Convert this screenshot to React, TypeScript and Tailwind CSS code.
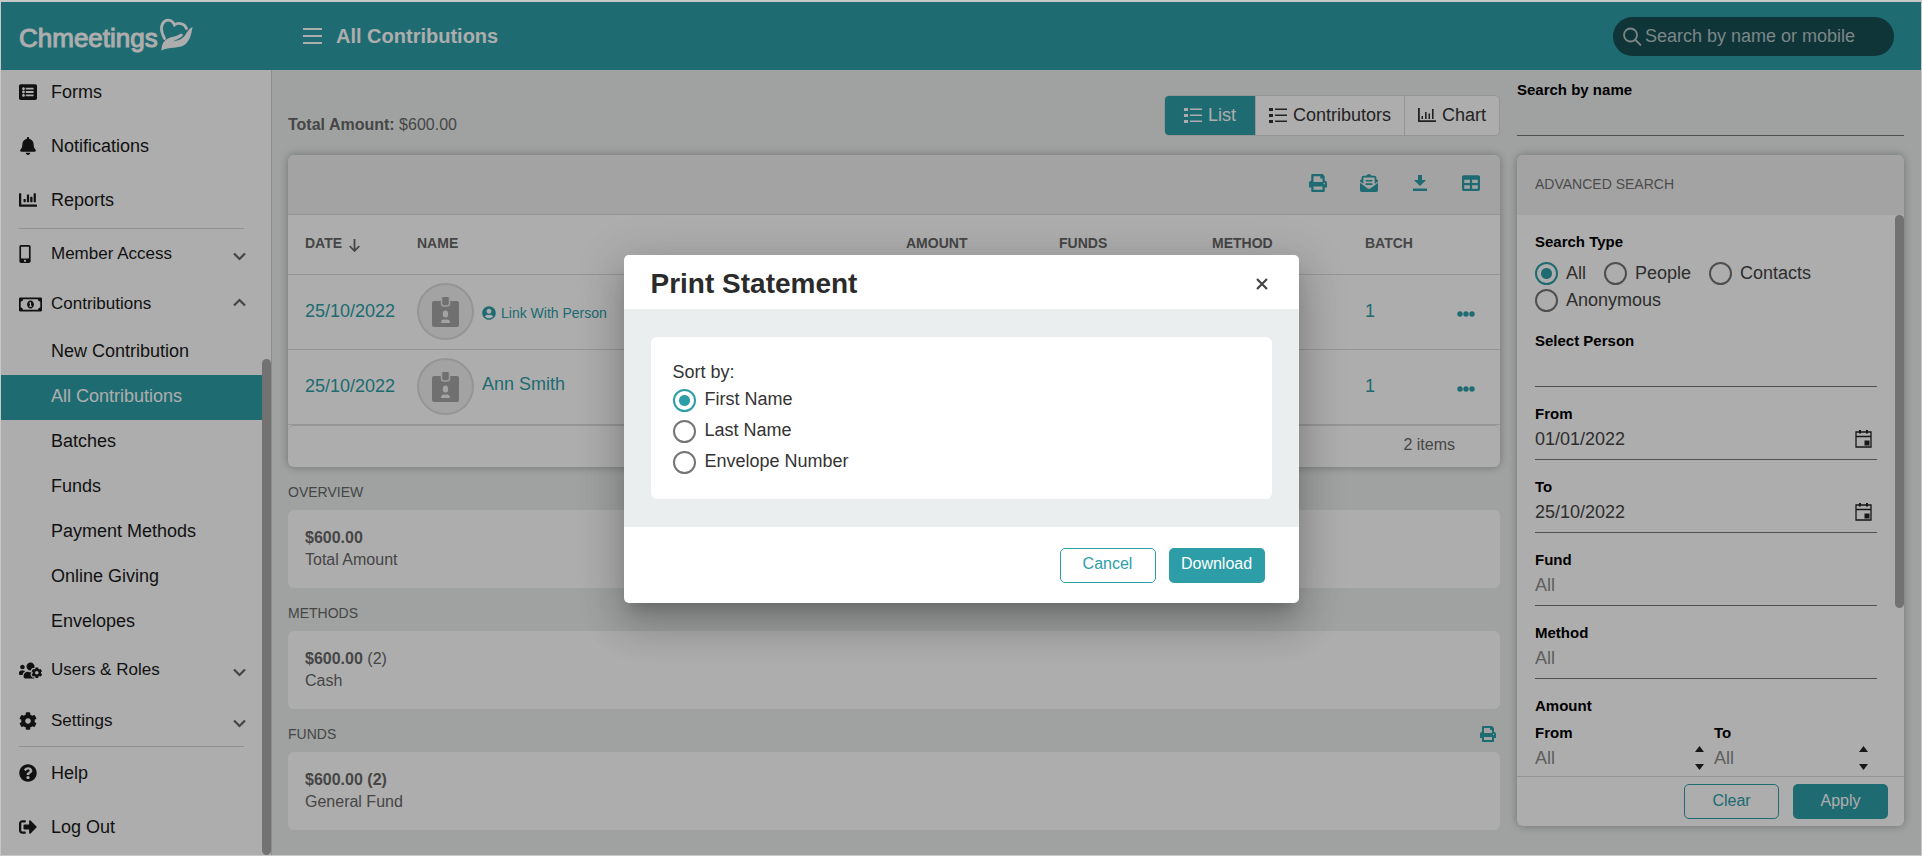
import React, { useState } from 'react';
import type { ReactNode } from 'react';
import {
  FaBell,
  FaChartBar,
  FaCog,
  FaEnvelopeOpenText,
  FaListAlt,
  FaMobileAlt,
  FaPrint,
  FaQuestionCircle,
  FaRegMoneyBillAlt,
  FaSignOutAlt,
  FaTable,
  FaUserCircle,
  FaUsersCog,
} from 'react-icons/fa';
import clsx from 'clsx';

interface Contribution {
  id: number;
  date: string;
  name?: string;
  batch: string;
}

const contributions: Contribution[] = [
  { id: 1, date: '25/10/2022', batch: '1' },
  { id: 2, date: '25/10/2022', name: 'Ann Smith', batch: '1' },
];

const contributionLinks = [
  'New Contribution',
  'All Contributions',
  'Batches',
  'Funds',
  'Payment Methods',
  'Online Giving',
  'Envelopes',
];

const LogoMark = () => (
  <svg width="33" height="34" viewBox="0 0 33 34" fill="none" className="mb-0.5" aria-hidden="true">
    <path
      d="M4.500 20.500C1.500 15 .500 10 2.500 6C5 1 11.500 .500 14.500 7C18 4 25 5.500 26.500 10.500"
      stroke="currentColor"
      strokeWidth="2.800"
      strokeLinecap="round"
    />
    <path
      d="M1.500 32.500C1.500 28 3 22 9 20C13 18.500 16 18.500 20 16C22 15 24 16.500 22 18.500C20 20.500 16 21.500 13 23.500C19 22.500 23 20.500 25.500 16.500C27.500 13.500 28.500 11 32.500 9C31.500 16 30 22.500 25 26.500C19 31 9 28.500 1.500 32.500Z"
      fill="currentColor"
    />
  </svg>
);

const ListIcon = () => (
  <svg width="18" height="16" viewBox="0 0 18 16" fill="currentColor" aria-hidden="true">
    <path d="M0 1h4v3H0zM0 7h4v3H0zM0 13h4v3H0zM6 1.500h12v1.500H6zM6 7.500h12V9H6zM6 13.500h12V15H6z" />
  </svg>
);

const ChartIcon = () => (
  <svg width="18" height="16" viewBox="0 0 18 16" fill="currentColor" aria-hidden="true">
    <path d="M0 1h1.800v12.200H18V15H0zM3.500 9H5v3H3.500zM7 5h1.600v7H7zM10.500 6.500H12V12h-1.500zM14 2h1.600v10H14z" />
  </svg>
);

const Chevron = ({ up }: { up?: boolean }) => (
  <svg width="13" height="9" viewBox="0 0 13 9" fill="none" stroke="#666" strokeWidth="2.200" aria-hidden="true">
    <path d={up ? 'M1 7.500 6.500 2 12 7.500' : 'M1 1.500 6.500 7 12 1.500'} />
  </svg>
);

const BadgeIcon = () => (
  <svg width="27" height="30" viewBox="0 0 27 30" aria-hidden="true">
    <rect y="4" width="27" height="26" rx="2" fill="#a6a6a6" />
    <rect x="9.500" y="-1" width="8" height="10" rx="2.500" fill="#a6a6a6" stroke="#e8e8e8" strokeWidth="1.500" />
    <ellipse cx="13.500" cy="17" rx="2.700" ry="3.600" fill="#f0f0f0" />
    <path d="M9 26c0-3 2-4 4.500-3.200C16 22 18 23 18 26z" fill="#f0f0f0" />
  </svg>
);

const CalendarIcon = () => (
  <svg width="17" height="18" viewBox="0 0 17 18" fill="none" stroke="#222" aria-hidden="true">
    <path d="M1 2h15v15H1zM1 6.500h15" strokeWidth="1.300" />
    <path d="M5 0v3.500M12 0v3.500" strokeWidth="2" />
    <rect x="10" y="11" width="4" height="4" fill="#222" />
  </svg>
);

interface RadioProps {
  name: string;
  label: string;
  checked: boolean;
  onChange: () => void;
  className?: string;
}

const Radio: React.FC<RadioProps> = ({ name, label, checked, onChange, className }) => (
  <label className={clsx('flex items-center', className)}>
    <input
      type="radio"
      name={name}
      checked={checked}
      onChange={onChange}
      className="size-[23px] shrink-0 appearance-none rounded-full border-2 border-[#757575] bg-white checked:border-[#2d9ea8] checked:bg-[radial-gradient(circle,#2d9ea8_5px,transparent_6px)]"
    />
    <span className="pb-0.5">{label}</span>
  </label>
);

interface NavItemProps {
  icon: ReactNode;
  label: string;
  chevron?: 'up' | 'down';
  className?: string;
}

const NavItem: React.FC<NavItemProps> = ({ icon, label, chevron, className }) => (
  <a href="#" className={clsx('flex items-center pr-4 pl-[18px]', className)}>
    <span className="flex w-8 items-center">{icon}</span>
    <span className="flex-1">{label}</span>
    {chevron && (
      <span className={chevron === 'up' ? 'pb-1' : 'pt-1'}>
        <Chevron up={chevron === 'up'} />
      </span>
    )}
  </a>
);

const Sidebar = () => (
  <aside className="flex w-[271px] shrink-0 overflow-hidden border-r border-[#d0d0d0] bg-white text-lg text-[#1a1a1a]">
    <nav className="min-w-0 flex-1">
      <div className="flex flex-col gap-2.5 pb-1.5">
        <NavItem className="h-11" icon={<FaListAlt size={18} />} label="Forms" />
        <NavItem className="h-11" icon={<FaBell size={18} />} label="Notifications" />
        <NavItem className="h-11" icon={<FaChartBar size={18} />} label="Reports" />
      </div>
      <hr className="mx-[18px] border-[#d5d5d5]" />
      <NavItem className="h-[50px] text-[17px]" icon={<FaMobileAlt size={18} className="-ml-[3px]" />} label="Member Access" chevron="down" />
      <NavItem className="h-[50px] text-[17px]" icon={<FaRegMoneyBillAlt size={23} />} label="Contributions" chevron="up" />
      <ul className="py-px">
        {contributionLinks.map((link) => (
          <li key={link}>
            <a
              href="#"
              className={clsx(
                'flex h-[45px] items-center pb-[3px] pl-[50px]',
                link === 'All Contributions' && 'bg-[#2d9ea8] text-white'
              )}
            >
              {link}
            </a>
          </li>
        ))}
      </ul>
      <NavItem className="h-[50px] pb-0.5 text-[17px]" icon={<FaUsersCog size={23} />} label="Users & Roles" chevron="down" />
      <NavItem className="h-[50px] text-[17px]" icon={<FaCog size={18} />} label="Settings" chevron="down" />
      <hr className="mx-[18px] border-[#d5d5d5]" />
      <NavItem className="h-[54px] pb-0.5" icon={<FaQuestionCircle size={18} />} label="Help" />
      <NavItem className="h-[54px] pb-0.5" icon={<FaSignOutAlt size={18} />} label="Log Out" />
    </nav>
    <div className="flex w-[9px] flex-col pt-[289px]">
      <div className="flex-1 rounded-full bg-[#a9a9a9]" />
    </div>
  </aside>
);

const Header = () => (
  <header className="flex h-[68px] shrink-0 items-center bg-[#2d9ea8] pr-[27px] pl-[18px] text-white">
    <a href="#" className="flex w-[284px] items-center gap-0.5">
      <span className="pt-1 text-[26px] leading-8 [-webkit-text-stroke:1px_white]">Chmeetings</span>
      <LogoMark />
    </a>
    <button type="button" aria-label="Toggle menu" className="mr-3.5">
      <svg width="19" height="17" viewBox="0 0 19 17" fill="currentColor" aria-hidden="true">
        <path d="M0 0h19v2H0zM0 7h19v2H0zM0 14h19v2H0z" />
      </svg>
    </button>
    <h1 className="flex-1 text-xl font-bold">All Contributions</h1>
    <label className="flex h-[39px] w-[281px] items-center gap-[3px] rounded-full bg-[#174f54] pr-4 pl-2.5">
      <svg width="19" height="19" viewBox="0 0 19 19" fill="none" stroke="#b5c5c7" strokeWidth="1.800" aria-hidden="true">
        <circle cx="7.500" cy="8" r="6.500" />
        <path d="m12 12.500 6 6" />
      </svg>
      <input
        type="text"
        aria-label="Search by name or mobile"
        placeholder="Search by name or mobile"
        className="min-w-0 flex-1 bg-transparent text-lg outline-none placeholder:text-[#b5c5c7]"
      />
    </label>
  </header>
);

const ContributionsTable = () => (
  <section className="overflow-hidden rounded-md bg-white shadow-[0_0_8px_rgba(0,0,0,0.3)]">
    <div className="flex h-[60px] items-center justify-end gap-[33px] border-b border-[#dcdcdc] bg-[#f0f0f0] pr-5 pb-1 text-[#2d9ea8]">
      <button type="button" aria-label="Print">
        <FaPrint size={18} />
      </button>
      <button type="button" aria-label="Send by email">
        <FaEnvelopeOpenText size={18} />
      </button>
      <button type="button" aria-label="Download" className="px-0.5">
        <svg width="14" height="16" viewBox="0 0 14 16" fill="currentColor" aria-hidden="true">
          <path d="M5 0h4v5h4L7 11 1 5h4zM0 13.500h14V16H0z" />
        </svg>
      </button>
      <button type="button" aria-label="Columns">
        <FaTable size={18} />
      </button>
    </div>
    <table className="w-full table-fixed text-left text-lg text-[#2d9ea8]">
      <thead>
        <tr className="h-[59px] border-b border-[#dcdcdc] text-sm text-[#686868]">
          <th className="w-28 pb-0.5 pl-[17px]">
            <span className="flex items-center gap-[7px]">
              DATE
              <svg width="11" height="13" viewBox="0 0 11 13" fill="none" stroke="currentColor" strokeWidth="1.800" className="mt-1" aria-hidden="true">
                <path d="M5.500 0v12M.700 7l4.800 5 4.800-5" />
              </svg>
            </span>
          </th>
          <th className="pb-0.5 pl-[17px]">NAME</th>
          <th className="w-[153px] pb-0.5 pl-[17px]">AMOUNT</th>
          <th className="w-[153px] pb-0.5 pl-[17px]">FUNDS</th>
          <th className="w-[153px] pb-0.5 pl-[17px]">METHOD</th>
          <th className="w-[92px] pb-0.5 pl-[17px]">BATCH</th>
          <th className="w-[60px]" aria-label="Actions" />
        </tr>
      </thead>
      <tbody>
        {contributions.map((item) => (
          <tr key={item.id} className="h-[75px] border-b border-[#dcdcdc]">
            <td className="pb-0.5 pl-[17px]">{item.date}</td>
            <td className="pl-[17px]">
              <div className="flex items-center gap-2">
                <span className="flex size-[57px] items-center justify-center rounded-full border-2 border-[#dcdcdc] bg-[#f0f0f0]">
                  <BadgeIcon />
                </span>
                {item.name ? (
                  <a href="#" className="pb-1.5">{item.name}</a>
                ) : (
                  <a href="#" className="flex items-center gap-[5px] pt-0.5 text-sm">
                    <FaUserCircle size={14} />
                    Link With Person
                  </a>
                )}
              </div>
            </td>
            <td />
            <td />
            <td />
            <td className="pb-0.5 pl-[17px]">{item.batch}</td>
            <td>
              <button type="button" aria-label="More actions" className="block pt-1 pl-[17px]">
                <svg width="18" height="6" viewBox="0 0 18 6" fill="currentColor" aria-hidden="true">
                  <circle cx="3" cy="3" r="2.700" />
                  <circle cx="9" cy="3" r="2.700" />
                  <circle cx="15" cy="3" r="2.700" />
                </svg>
              </button>
            </td>
          </tr>
        ))}
      </tbody>
    </table>
    <div className="flex h-[42px] items-center justify-end rounded-t-md border-t border-[#dcdcdc] pr-[45px] pb-0.5 text-base text-[#686868]">
      2 items
    </div>
  </section>
);

interface SummaryProps {
  title: string;
  amount: string;
  count?: ReactNode;
  label: string;
  action?: ReactNode;
}

const Summary: React.FC<SummaryProps> = ({ title, amount, count, label, action }) => (
  <section>
    <div className="flex items-center justify-between pt-[15px] pr-1 pb-2 text-[#686868]">
      <h2 className="text-sm">{title}</h2>
      {action}
    </div>
    <div className="rounded-md bg-white px-[17px] py-[17px] text-base leading-[22px] text-[#686868]">
      <p>
        <strong>{amount}</strong> {count}
      </p>
      <p>{label}</p>
    </div>
  </section>
);

interface FieldProps {
  id: string;
  label: string;
  children: ReactNode;
}

const Field: React.FC<FieldProps> = ({ id, label, children }) => (
  <div>
    <label htmlFor={id} className="block text-[15px] leading-5 font-bold text-black">
      {label}
    </label>
    <div className="flex h-9 items-center border-b border-[#757575] pb-[5px]">{children}</div>
  </div>
);

const DateField = ({ id, label, value }: { id: string; label: string; value: string }) => (
  <Field id={id} label={label}>
    <input id={id} type="text" defaultValue={value} className="min-w-0 flex-1 outline-none" />
    <button type="button" aria-label={`Open ${label} calendar`} className="pr-[5px]">
      <CalendarIcon />
    </button>
  </Field>
);

const SelectField = ({ id, label }: { id: string; label: string }) => (
  <Field id={id} label={label}>
    <select id={id} className="w-full appearance-none text-[#8c8c8c] outline-none">
      <option>All</option>
    </select>
  </Field>
);

const AmountField = ({ id, label }: { id: string; label: string }) => (
  <Field id={id} label={label}>
    <input id={id} type="text" placeholder="All" className="min-w-0 flex-1 outline-none placeholder:text-[#8c8c8c]" />
    <div className="flex flex-col gap-3 text-[#222]">
      <button type="button" aria-label={`Increase ${label}`}>
        <svg width="9" height="6" viewBox="0 0 9 6" fill="currentColor" className="block"><path d="M4.500 0 9 6H0z" /></svg>
      </button>
      <button type="button" aria-label={`Decrease ${label}`}>
        <svg width="9" height="6" viewBox="0 0 9 6" fill="currentColor" className="block"><path d="M4.500 6 9 0H0z" /></svg>
      </button>
    </div>
  </Field>
);

const AdvancedSearch = () => {
  const [searchType, setSearchType] = useState('All');

  return (
    <aside className="flex w-[387px] shrink-0 flex-col pt-2.5 pb-[29px]">
      <Field id="search-name" label="Search by name">
        <input id="search-name" type="text" className="w-full outline-none" />
      </Field>
      <section className="mt-[19px] flex min-h-0 flex-1 flex-col overflow-hidden rounded-md bg-white shadow-[0_0_8px_rgba(0,0,0,0.3)]">
        <h2 className="flex h-[60px] shrink-0 items-center bg-[#f0f0f0] pb-0.5 pl-[18px] text-sm text-[#707070]">
          ADVANCED SEARCH
        </h2>
        <div className="flex min-h-0 flex-1 overflow-hidden text-lg text-[#444]">
          <div className="flex min-w-0 flex-1 flex-col gap-[17px] px-[18px] py-[17px]">
            <fieldset>
              <legend className="mb-2 text-[15px] leading-5 font-bold text-black">Search Type</legend>
              <div className="flex flex-wrap gap-x-[18px]">
                {['All', 'People', 'Contacts', 'Anonymous'].map((type) => (
                  <Radio
                    key={type}
                    name="search-type"
                    label={type}
                    checked={searchType === type}
                    onChange={() => setSearchType(type)}
                    className="h-[27px] gap-2"
                  />
                ))}
              </div>
            </fieldset>
            <Field id="person" label="Select Person">
              <input id="person" type="text" className="w-full outline-none" />
            </Field>
            <DateField id="date-from" label="From" value="01/01/2022" />
            <DateField id="date-to" label="To" value="25/10/2022" />
            <SelectField id="fund" label="Fund" />
            <SelectField id="method" label="Method" />
            <div>
              <p className="mb-[7px] text-[15px] leading-5 font-bold text-black">Amount</p>
              <div className="flex gap-2.5">
                <div className="min-w-0 flex-1">
                  <AmountField id="amount-from" label="From" />
                </div>
                <div className="w-[163px] pr-[9px]">
                  <AmountField id="amount-to" label="To" />
                </div>
              </div>
            </div>
          </div>
          <div className="w-[9px]">
            <div className="h-[70%] rounded-full bg-[#a9a9a9]" />
          </div>
        </div>
        <div className="flex h-[50px] shrink-0 items-center justify-end gap-3.5 border-t border-[#dcdcdc] pr-4">
          <button type="button" className="h-[35px] w-[95px] rounded-[5px] border border-[#2d9ea8] pb-0.5 text-[#2d9ea8]">
            Clear
          </button>
          <button type="button" className="h-[35px] w-[95px] rounded-[5px] bg-[#2d9ea8] pb-0.5 text-white">
            Apply
          </button>
        </div>
      </section>
    </aside>
  );
};

const PrintDialog = () => {
  const [sortBy, setSortBy] = useState('First Name');

  return (
    <div className="absolute inset-0 flex items-center justify-center bg-black/32">
      <div
        role="dialog"
        aria-modal="true"
        aria-labelledby="print-title"
        className="w-[675px] overflow-hidden rounded-[5px] bg-white text-[#333] shadow-[0_11px_15px_-7px_rgba(0,0,0,0.2),0_24px_38px_3px_rgba(0,0,0,0.14),0_9px_46px_8px_rgba(0,0,0,0.12)]"
      >
        <div className="flex h-[54px] items-center justify-between pt-1 pr-[31px] pl-[27px]">
          <h2 id="print-title" className="text-[28px] leading-9 font-bold text-[#2b2b2b]">
            Print Statement
          </h2>
          <button type="button" aria-label="Close">
            <svg width="12" height="12" viewBox="0 0 12 12" fill="none" stroke="#444" strokeWidth="2.200" aria-hidden="true">
              <path d="m1 1 10 10M11 1 1 11" />
            </svg>
          </button>
        </div>
        <div className="bg-[#eaeeef] px-[27px] py-7">
          <fieldset className="rounded-md bg-white px-[22px] pt-[22px] pb-[21px] text-lg">
            <legend className="float-left w-full leading-[26px]">Sort by:</legend>
            {['First Name', 'Last Name', 'Envelope Number'].map((option) => (
              <Radio
                key={option}
                name="sort-by"
                label={option}
                checked={sortBy === option}
                onChange={() => setSortBy(option)}
                className="clear-both h-[31px] gap-[9px]"
              />
            ))}
          </fieldset>
        </div>
        <div className="flex justify-end gap-[13px] pt-[21px] pr-[34px] pb-5">
          <button type="button" className="h-[35px] w-24 rounded-[5px] border border-[#2d9ea8] pb-0.5 text-[#2d9ea8]">
            Cancel
          </button>
          <button type="button" className="h-[35px] w-24 rounded-[5px] bg-[#2d9ea8] pb-0.5 text-white">
            Download
          </button>
        </div>
      </div>
    </div>
  );
};

const App = () => (
  <div className="relative flex h-screen flex-col overflow-hidden border border-t-2 border-[#c8c8c8] bg-[#ebefee] font-['Liberation_Sans',Arial,sans-serif]">
    <Header />
    <div className="flex min-h-0 flex-1">
      <Sidebar />
      <main className="flex min-w-0 flex-1 gap-[17px] pr-[17px] pl-4">
        <div className="min-w-0 flex-1 pt-[25px]">
          <div className="mb-[19px] flex items-end justify-between">
            <p className="text-base leading-[22px] text-[#686868]">
              <strong>Total Amount:</strong> $600.00
            </p>
            <div className="flex h-[41px] overflow-hidden rounded-[5px] border border-[#dcdcdc] bg-white text-lg text-[#333]">
              <button type="button" className="flex items-center gap-1.5 bg-[#2d9ea8] px-[19px] pb-0.5 text-white">
                <ListIcon />
                List
              </button>
              <button type="button" className="flex items-center gap-1.5 border-x border-[#dcdcdc] px-[13px] pb-0.5">
                <ListIcon />
                Contributors
              </button>
              <button type="button" className="flex items-center gap-1.5 px-[13px] pb-0.5">
                <ChartIcon />
                Chart
              </button>
            </div>
          </div>
          <ContributionsTable />
          <Summary title="OVERVIEW" amount="$600.00" label="Total Amount" />
          <Summary title="METHODS" amount="$600.00" count="(2)" label="Cash" />
          <Summary
            title="FUNDS"
            amount="$600.00"
            count={<strong>(2)</strong>}
            label="General Fund"
            action={
              <button type="button" aria-label="Print funds" className="text-[#2d9ea8]">
                <FaPrint size={16} />
              </button>
            }
          />
        </div>
        <AdvancedSearch />
      </main>
    </div>
    <PrintDialog />
  </div>
);

export default App;
